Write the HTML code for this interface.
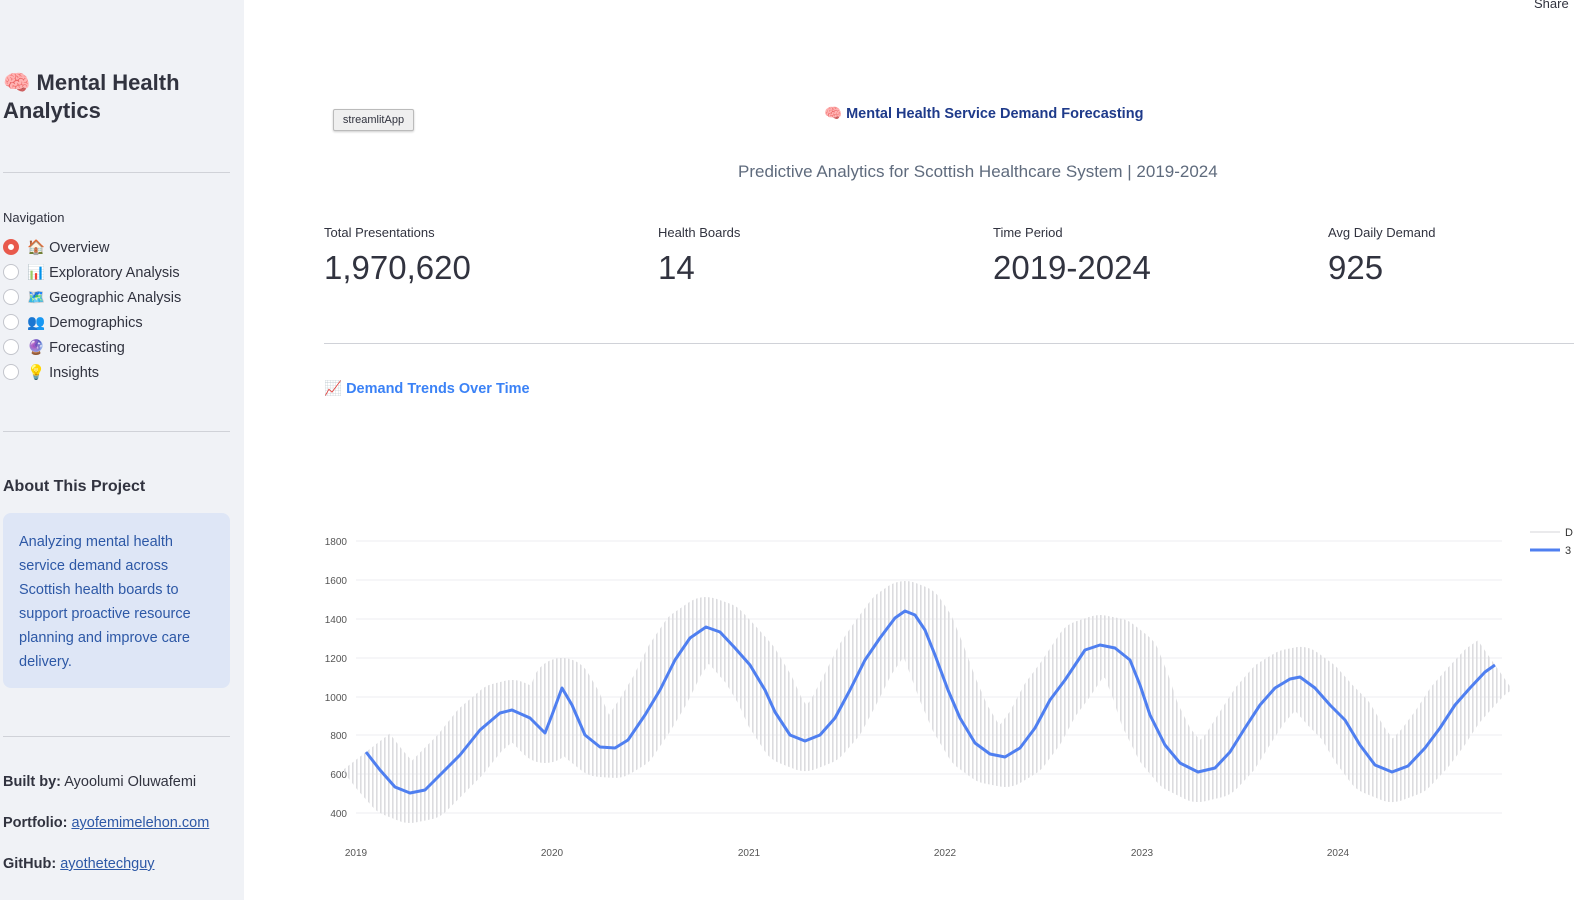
<!DOCTYPE html>
<html><head><meta charset="utf-8"><style>
*{margin:0;padding:0;box-sizing:border-box}
body{width:1574px;height:900px;overflow:hidden;background:#fff;font-family:"Liberation Sans","Noto Sans CJK SC",sans-serif;color:#31333f;position:relative}
.sb{position:absolute;left:0;top:0;width:244px;height:900px;background:#f0f2f6}
.a{position:absolute;white-space:nowrap}
.hr{position:absolute;height:1px;background:#d0d2d8}
.radio{position:absolute;left:3px;width:16px;height:16px;border-radius:50%;border:1px solid #c3c5cc;background:#fff}
.nav{position:absolute;left:27px;font-size:14.5px}
.lbl{font-size:13px}
.val{font-size:33px}
</style></head><body>
<div class="sb"></div>
<div class="a" style="left:3px;top:69px;font-size:22px;font-weight:bold;line-height:28px">🧠 Mental Health<br>Analytics</div>
<div class="hr" style="left:3px;top:172px;width:227px"></div>
<div class="a" style="left:3px;top:210px;font-size:13px">Navigation</div>
<div class="radio" style="top:239px;border:5px solid #e8594c"></div>
<div class="radio" style="top:264px"></div>
<div class="radio" style="top:289px"></div>
<div class="radio" style="top:314px"></div>
<div class="radio" style="top:339px"></div>
<div class="radio" style="top:364px"></div>
<div class="nav" style="top:239px">🏠 Overview</div>
<div class="nav" style="top:264px">📊 Exploratory Analysis</div>
<div class="nav" style="top:289px">🗺️ Geographic Analysis</div>
<div class="nav" style="top:314px">👥 Demographics</div>
<div class="nav" style="top:339px">🔮 Forecasting</div>
<div class="nav" style="top:364px">💡 Insights</div>
<div class="hr" style="left:3px;top:431px;width:227px"></div>
<div class="a" style="left:3px;top:478px;font-size:16px;font-weight:bold">About This Project</div>
<div class="a" style="left:3px;top:513px;width:227px;height:175px;background:#dee6f6;border-radius:8px;padding:17px 14px 0 16px;color:#2d58a6;font-size:14.5px;line-height:24px;white-space:normal">Analyzing mental health service demand across Scottish health boards to support proactive resource planning and improve care delivery.</div>
<div class="hr" style="left:3px;top:736px;width:227px"></div>
<div class="a" style="left:3px;top:774px;font-size:14.5px"><b>Built by:</b> Ayoolumi Oluwafemi</div>
<div class="a" style="left:3px;top:815px;font-size:14.5px"><b>Portfolio:</b> <u style="color:#2d58a6">ayofemimelehon.com</u></div>
<div class="a" style="left:3px;top:856px;font-size:14.5px"><b>GitHub:</b> <u style="color:#2d58a6">ayothetechguy</u></div>

<div class="a" style="left:1534px;top:-4px;font-size:13px">Share</div>
<div class="a" style="left:333px;top:109px;width:81px;height:22px;border:1px solid #bbb;border-radius:2px;background:#efefef;font-size:11px;text-align:center;line-height:20px;box-shadow:0 1px 2px rgba(0,0,0,.2)">streamlitApp</div>
<div class="a" style="left:824px;top:105px;font-size:14.5px;font-weight:bold;color:#1e3a8a">🧠 Mental Health Service Demand Forecasting</div>
<div class="a" style="left:738px;top:162px;font-size:17px;color:#5f6b7d">Predictive Analytics for Scottish Healthcare System | 2019-2024</div>

<div class="a lbl" style="left:324px;top:225px">Total Presentations</div>
<div class="a val" style="left:324px;top:249px">1,970,620</div>
<div class="a lbl" style="left:658px;top:225px">Health Boards</div>
<div class="a val" style="left:658px;top:249px">14</div>
<div class="a lbl" style="left:993px;top:225px">Time Period</div>
<div class="a val" style="left:993px;top:249px">2019-2024</div>
<div class="a lbl" style="left:1328px;top:225px">Avg Daily Demand</div>
<div class="a val" style="left:1328px;top:249px">925</div>
<div class="hr" style="left:324px;top:343px;width:1250px"></div>
<div class="a" style="left:324px;top:380px;font-size:14.5px;font-weight:bold;color:#3b82f6">📈 Demand Trends Over Time</div>

<svg class="a" style="left:0;top:0" width="1574" height="900" font-family="Liberation Sans, sans-serif" font-size="10" fill="#555">
<defs><pattern id="p" width="4" height="900" patternUnits="userSpaceOnUse"><rect width="1.6" height="900" fill="#dcdcdf"/></pattern></defs>
<g stroke="#ededf0" stroke-width="1">
<line x1="356" x2="1502" y1="541" y2="541"/><line x1="356" x2="1502" y1="580" y2="580"/><line x1="356" x2="1502" y1="619" y2="619"/><line x1="356" x2="1502" y1="658" y2="658"/><line x1="356" x2="1502" y1="697" y2="697"/><line x1="356" x2="1502" y1="735" y2="735"/><line x1="356" x2="1502" y1="774" y2="774"/><line x1="356" x2="1502" y1="813" y2="813"/>
</g>
<g text-anchor="end"><text x="347" y="545">1800</text><text x="347" y="584">1600</text><text x="347" y="623">1400</text><text x="347" y="662">1200</text><text x="347" y="701">1000</text><text x="347" y="739">800</text><text x="347" y="778">600</text><text x="347" y="817">400</text></g>
<g text-anchor="middle"><text x="356" y="856">2019</text><text x="552" y="856">2020</text><text x="749" y="856">2021</text><text x="945" y="856">2022</text><text x="1142" y="856">2023</text><text x="1338" y="856">2024</text></g>
<polyline fill="none" stroke="url(#p)" stroke-width="60" stroke-linejoin="round" points="366,752 380,770 395,787 410,793 425,790 440,775 460,755 480,730 500,713 512,710 530,718 545,733 552,715 562,688 572,705 585,735 600,747 615,748 628,740 645,715 660,690 675,660 690,638 706,627 720,632 735,648 750,665 765,690 775,712 790,735 805,741 820,735 835,718 850,690 865,660 880,638 895,618 905,611 915,615 925,630 935,655 948,690 960,718 975,743 990,754 1005,757 1020,748 1035,728 1050,700 1065,680 1085,650 1100,645 1115,648 1130,660 1140,685 1150,715 1165,745 1180,763 1198,772 1215,768 1230,752 1245,728 1260,705 1275,688 1290,679 1300,677 1315,688 1330,705 1345,720 1360,745 1375,765 1392,772 1408,766 1425,748 1440,728 1455,705 1470,688 1485,672 1495,665"/>
<polyline fill="none" stroke="#4f7ff0" stroke-width="3" stroke-linejoin="round" points="366,752 380,770 395,787 410,793 425,790 440,775 460,755 480,730 500,713 512,710 530,718 545,733 552,715 562,688 572,705 585,735 600,747 615,748 628,740 645,715 660,690 675,660 690,638 706,627 720,632 735,648 750,665 765,690 775,712 790,735 805,741 820,735 835,718 850,690 865,660 880,638 895,618 905,611 915,615 925,630 935,655 948,690 960,718 975,743 990,754 1005,757 1020,748 1035,728 1050,700 1065,680 1085,650 1100,645 1115,648 1130,660 1140,685 1150,715 1165,745 1180,763 1198,772 1215,768 1230,752 1245,728 1260,705 1275,688 1290,679 1300,677 1315,688 1330,705 1345,720 1360,745 1375,765 1392,772 1408,766 1425,748 1440,728 1455,705 1470,688 1485,672 1495,665"/>
<line x1="1530" x2="1560" y1="532" y2="532" stroke="#e4e4e6" stroke-width="1.5"/>
<line x1="1530" x2="1560" y1="550" y2="550" stroke="#4f7ff0" stroke-width="3"/>
<text x="1565" y="536" fill="#333" font-size="11">D</text><text x="1565" y="554" fill="#333" font-size="11">3</text>
</svg>
</body></html>
